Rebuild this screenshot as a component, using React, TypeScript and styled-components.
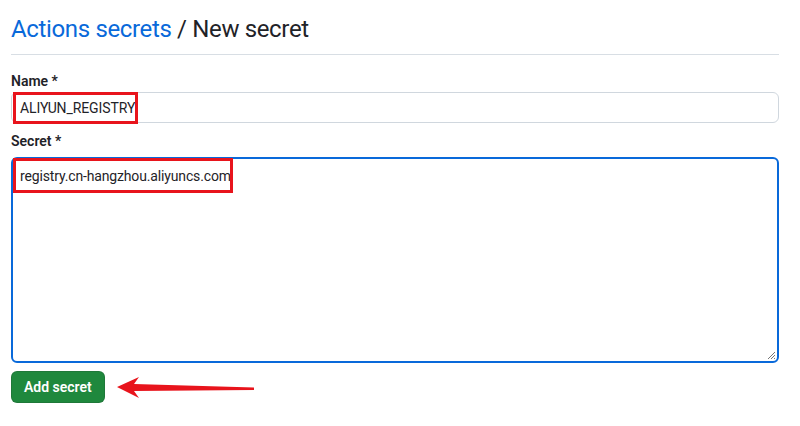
import styled, { createGlobalStyle } from "styled-components";

const GlobalStyle = createGlobalStyle`
  body {
    margin: 0;
    background: #fff;
    font-family: Roboto, "Noto Sans", sans-serif;
    color: #1f2328;
  }
`;

const Page = styled.div`
  display: flex;
  flex-direction: column;
  width: 768px;
  padding-left: 11px;
`;

const Header = styled.div`
  padding: 12px 0 7px;
  border-bottom: 1px solid #d8dee4;
`;

const Title = styled.h2`
  margin: 0;
  font-size: 24px;
  font-weight: 400;
  line-height: 35px;
  letter-spacing: -0.35px;
`;

const Crumb = styled.span`
  color: #0969da;
`;

const Field = styled.div<{ $top: number; $gap: number }>`
  display: flex;
  flex-direction: column;
  gap: ${(p) => p.$gap}px;
  margin-top: ${(p) => p.$top}px;
`;

const Label = styled.label`
  font-size: 14px;
  font-weight: 600;
  line-height: 20px;
`;

const Input = styled.div`
  position: relative;
  box-sizing: border-box;
  height: 31px;
  border: 1px solid #d0d7de;
  border-radius: 6px;
  padding: 0 8px;
  font-size: 14px;
  line-height: 31px;
  letter-spacing: -0.1px;
`;

const TextArea = styled.div`
  position: relative;
  box-sizing: border-box;
  height: 206px;
  border: 2px solid #0969da;
  border-radius: 6px;
  padding: 7px;
  font-size: 14px;
  line-height: 20px;
  letter-spacing: -0.15px;
`;

const Grip = styled.svg`
  position: absolute;
  right: 1px;
  bottom: 1px;
`;

const Mark = styled.div`
  position: absolute;
  border: 3px solid #e8141c;
  box-sizing: border-box;
  pointer-events: none;
`;

const Actions = styled.div`
  display: flex;
  align-items: center;
  gap: 8px;
  margin-top: 8px;
`;

const Button = styled.button`
  height: 32px;
  padding: 0 12px;
  border: 1px solid rgba(31, 35, 40, 0.15);
  border-radius: 6px;
  background: #1f883d;
  color: #fff;
  font-family: inherit;
  font-size: 14px;
  font-weight: 600;
`;

export default function App() {
  return (
    <>
      <GlobalStyle />
      <Page>
        <Header>
          <Title>
            <Crumb>Actions secrets</Crumb> / New secret
          </Title>
        </Header>
        <Field $top={16} $gap={1}>
          <Label>Name *</Label>
          <Input>
            ALIYUN_REGISTRY
            <Mark style={{ left: 1, top: -1, width: 125, height: 32 }} />
          </Input>
        </Field>
        <Field $top={8} $gap={6}>
          <Label>Secret *</Label>
          <TextArea>
            registry.cn-hangzhou.aliyuncs.com
            <Mark style={{ left: 0, top: -1, width: 220, height: 35 }} />
            <Grip width="9" height="9" viewBox="0 0 9 9">
              <path d="M8 1L1 8M8 4L4 8M8 7L7 8" stroke="#777" strokeWidth="1" />
            </Grip>
          </TextArea>
        </Field>
        <Actions>
          <Button>Add secret</Button>
          <svg width="150" height="26" viewBox="0 0 150 26">
            <path d="M4 13 L26 3 L21 10 L141 13.5 L141 16 L21 17 L26 24 Z" fill="#e8141c" />
          </svg>
        </Actions>
      </Page>
    </>
  );
}
